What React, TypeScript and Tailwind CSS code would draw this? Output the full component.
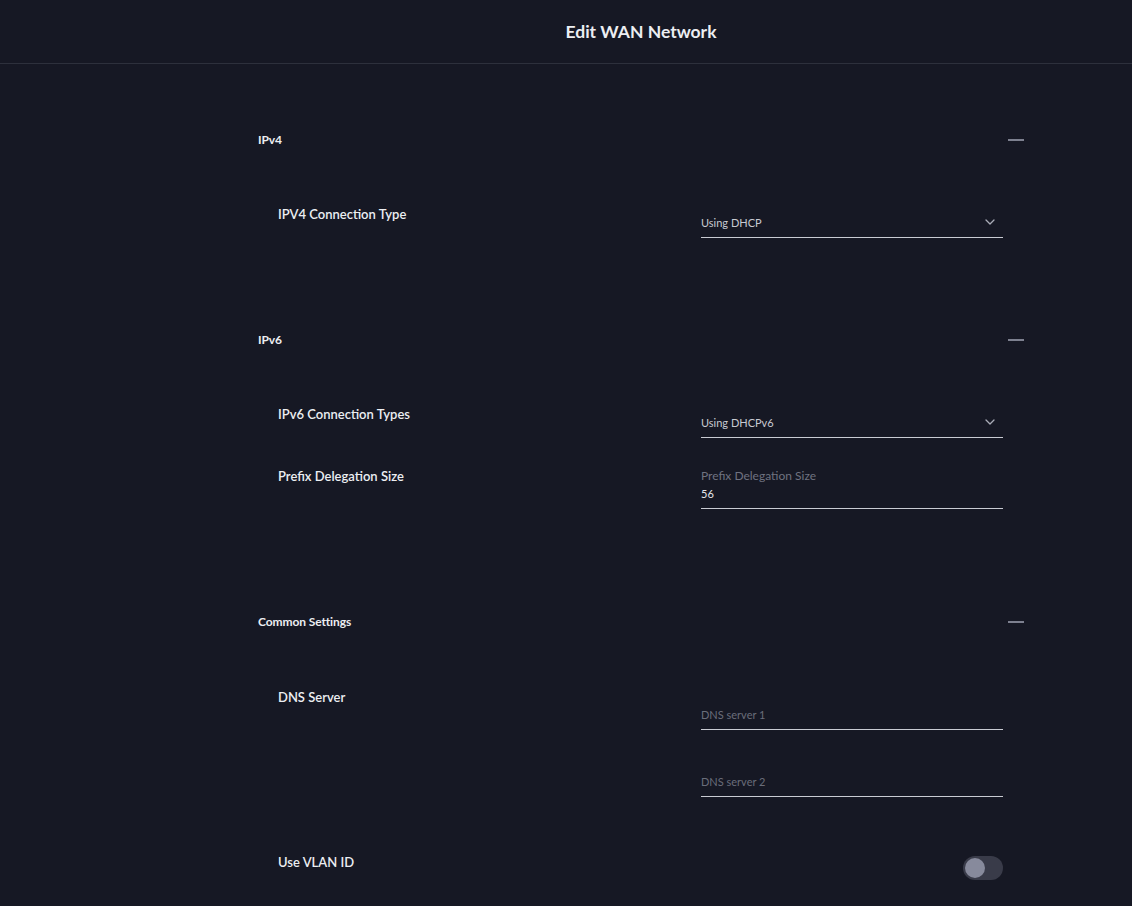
import React from "react";

function SectionHeader({ title }: { title: string }) {
  return (
    <div className="flex items-center justify-between h-5">
      <span className="text-[12px] font-bold text-[#eceef2] tracking-[-0.1px]">{title}</span>
      <span className="w-4 h-[2px] bg-[#7d808f]" />
    </div>
  );
}

function Row({ label, children, className = "" }: { label: string; children?: React.ReactNode; className?: string }) {
  return (
    <div className={"flex items-start " + className}>
      <div className="w-[443px] pl-5 text-[13px] leading-5 font-semibold text-[#eceef2]">{label}</div>
      <div className="w-[302px]">{children}</div>
    </div>
  );
}

function Select({ value }: { value: string }) {
  return (
    <div className="h-[34px] pt-[11px] border-b border-[#c9cbd3] flex items-start justify-between">
      <span className="text-[11px] leading-4 text-[#c8cad2]">{value}</span>
      <svg width="10" height="6" viewBox="0 0 10 6" className="mt-[4px] mr-[8px]" fill="none">
        <polyline points="1,1 5,5 9,1" stroke="#a9acb7" strokeWidth="1.3" strokeLinecap="round" strokeLinejoin="round" />
      </svg>
    </div>
  );
}

function Field({ label, value, placeholder }: { label?: string; value?: string; placeholder?: string }) {
  return (
    <div className={(label ? "pt-[2px]" : "pt-5") + " pb-[6px] border-b border-[#c9cbd3]"}>
      {label && <div className="text-[12px] leading-4 text-[#6f7280]">{label}</div>}
      {label ? (
        <div className="mt-[2px] text-[11px] leading-4 text-[#e4e6ea]">{value}</div>
      ) : (
        <div className="text-[11px] leading-4 text-[#6a6d7a]">{placeholder}</div>
      )}
    </div>
  );
}

export default function App() {
  return (
    <div className="min-h-[906px] w-full bg-[#161824] font-['Lato','Noto_Sans',sans-serif] antialiased">
      <header className="h-16 pt-[2px] border-b border-[#2d303c] flex items-center pl-[150px]">
        <h1 className="flex-1 text-center text-[17.5px] font-bold text-[#eceef2]">Edit WAN Network</h1>
      </header>
      <main className="pl-[150px] pt-[66px] pb-6">
        <div className="w-[766px] mx-auto">
          <SectionHeader title="IPv4" />
          <Row label="IPV4 Connection Type" className="mt-[54px]">
            <Select value="Using DHCP" />
          </Row>

          <div className="mt-[92px]">
            <SectionHeader title="IPv6" />
          </div>
          <Row label="IPv6 Connection Types" className="mt-[54px]">
            <Select value="Using DHCPv6" />
          </Row>
          <Row label="Prefix Delegation Size" className="mt-[28px]">
            <Field label="Prefix Delegation Size" value="56" />
          </Row>

          <div className="mt-[103px]">
            <SectionHeader title="Common Settings" />
          </div>
          <Row label="DNS Server" className="mt-[55px]">
            <Field placeholder="DNS server 1" />
            <div className="mt-6">
              <Field placeholder="DNS server 2" />
            </div>
          </Row>
          <Row label="Use VLAN ID" className="mt-[55px]">
            <div className="flex justify-end mt-[4px]">
              <button className="w-10 h-6 rounded-full bg-[#393b49] flex items-center px-[2px]">
                <span className="w-5 h-5 rounded-full bg-[#878a9c]" />
              </button>
            </div>
          </Row>
        </div>
      </main>
    </div>
  );
}
